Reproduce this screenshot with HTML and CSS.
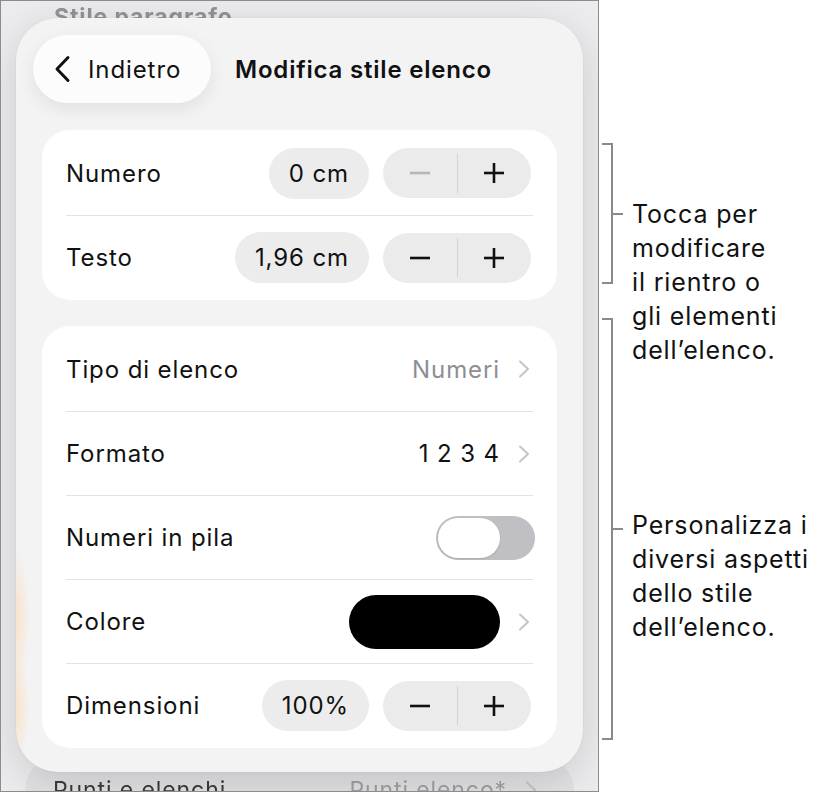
FILE: index.html
```html
<!DOCTYPE html>
<html lang="it">
<head>
  <meta charset="UTF-8">
  <meta name="viewport" content="width=device-width, initial-scale=1.0">
  <title>Modifica stile elenco</title>
  <link rel="stylesheet" href="styles.css">
</head>
<body>

  <div class="page">
    <div class="device">
      <!-- the sheet behind the popover -->
      <div class="backdrop">
        <div class="backdrop-title">Stile paragrafo</div>
        <div class="backdrop-card">
          <span>Punti e elenchi</span>
          <div class="detail">
            <span class="backdrop-value">Punti elenco*</span>
            <svg class="chevron" width="14" height="18" viewBox="0 0 14 18"><polyline points="3,1.5 11,9 3,16.5"/></svg>
          </div>
        </div>
      </div>

      <div class="popover">
        <div class="popover-header">
          <button class="back-btn">
            <svg width="17" height="28" viewBox="0 0 17 28"><polyline points="14,2.5 3,14 14,25.5" fill="none" stroke="#111" stroke-width="3" stroke-linecap="round" stroke-linejoin="round"/></svg>
            Indietro
          </button>
          <h1>Modifica stile elenco</h1>
        </div>

        <div class="group">
          <div class="row">
            <span>Numero</span>
            <div class="controls">
              <span class="value">0 cm</span>
              <div class="stepper">
                <span class="step disabled">
                  <svg width="22" height="22" viewBox="0 0 22 22"><line x1="1" y1="11" x2="21" y2="11"/></svg>
                </span>
                <span class="step-divider"></span>
                <span class="step">
                  <svg width="22" height="22" viewBox="0 0 22 22"><line x1="1" y1="11" x2="21" y2="11"/><line x1="11" y1="1" x2="11" y2="21"/></svg>
                </span>
              </div>
            </div>
          </div>
          <div class="row">
            <span>Testo</span>
            <div class="controls">
              <span class="value">1,96 cm</span>
              <div class="stepper">
                <span class="step">
                  <svg width="22" height="22" viewBox="0 0 22 22"><line x1="1" y1="11" x2="21" y2="11"/></svg>
                </span>
                <span class="step-divider"></span>
                <span class="step">
                  <svg width="22" height="22" viewBox="0 0 22 22"><line x1="1" y1="11" x2="21" y2="11"/><line x1="11" y1="1" x2="11" y2="21"/></svg>
                </span>
              </div>
            </div>
          </div>
        </div>

        <div class="group">
          <div class="row">
            <span>Tipo di elenco</span>
            <div class="detail">
              <span class="muted">Numeri</span>
              <svg class="chevron" width="14" height="18" viewBox="0 0 14 18"><polyline points="3,1.5 11,9 3,16.5"/></svg>
            </div>
          </div>
          <div class="row">
            <span>Formato</span>
            <div class="detail">
              <span class="digits">1 2 3 4</span>
              <svg class="chevron" width="14" height="18" viewBox="0 0 14 18"><polyline points="3,1.5 11,9 3,16.5"/></svg>
            </div>
          </div>
          <div class="row">
            <span>Numeri in pila</span>
            <span class="toggle"><span class="knob"></span></span>
          </div>
          <div class="row">
            <span>Colore</span>
            <div class="detail">
              <span class="swatch"></span>
              <svg class="chevron" width="14" height="18" viewBox="0 0 14 18"><polyline points="3,1.5 11,9 3,16.5"/></svg>
            </div>
          </div>
          <div class="row">
            <span>Dimensioni</span>
            <div class="controls">
              <span class="value">100%</span>
              <div class="stepper">
                <span class="step">
                  <svg width="22" height="22" viewBox="0 0 22 22"><line x1="1" y1="11" x2="21" y2="11"/></svg>
                </span>
                <span class="step-divider"></span>
                <span class="step">
                  <svg width="22" height="22" viewBox="0 0 22 22"><line x1="1" y1="11" x2="21" y2="11"/><line x1="11" y1="1" x2="11" y2="21"/></svg>
                </span>
              </div>
            </div>
          </div>
        </div>
      </div>
    </div>

    <div class="notes">
      <div class="brackets">
        <div class="bracket bracket-indent"></div>
        <div class="bracket bracket-style"></div>
      </div>
      <div class="note-text">
        <p class="note">Tocca per<br>modificare<br>il rientro o<br>gli elementi<br>dell’elenco.</p>
        <p class="note note-second">Personalizza i<br>diversi aspetti<br>dello stile<br>dell’elenco.</p>
      </div>
    </div>
  </div>

</body>
</html>
```

FILE: styles.css
```css
* {
  box-sizing: border-box;
}

body {
  margin: 0;
  font-family: Inter, "Noto Sans", sans-serif;
  background: #fff;
  color: #111;
}

.page {
  display: flex;
  align-items: flex-start;
}

/* device frame */
.device {
  position: relative;
  flex-shrink: 0;
  width: 599px;
  height: 792px;
  border: 1px solid #8c8c90;
  background: #ececee;
  overflow: hidden;
  letter-spacing: 0.9px;
}

.backdrop {
  height: 100%;
  display: flex;
  flex-direction: column;
  justify-content: space-between;
  filter: blur(0.6px);
}

.backdrop-title {
  margin: 2px 0 0 53px;
  font-size: 23px;
  font-weight: 700;
  color: #939397;
}

.backdrop-card {
  height: 64px;
  margin: 0 24px -32px;
  padding: 17px 34px 0 28px;
  display: flex;
  align-items: flex-start;
  justify-content: space-between;
  border-radius: 30px;
  background: #e2e2e5;
  font-size: 23px;
  color: #3a3a3c;
}

.backdrop-value {
  color: #a0a0a4;
}

/* popover */
.popover {
  position: absolute;
  left: 15px;
  top: 17px;
  width: 567px;
  height: 754px;
  padding: 17px 26px 0;
  border-radius: 42px;
  background:
    radial-gradient(ellipse 14px 70px at 0 600px, rgba(255, 214, 170, 0.6), transparent),
    radial-gradient(ellipse 14px 60px at 0 690px, rgba(255, 214, 170, 0.6), transparent),
    #f3f3f4;
  box-shadow: 0 10px 40px rgba(0, 0, 0, 0.14), 0 0 0 1px rgba(0, 0, 0, 0.02);
}

.popover-header {
  display: flex;
  align-items: center;
  gap: 24px;
  margin: 0 -9px 27px;
}

.back-btn {
  display: flex;
  align-items: center;
  gap: 17px;
  width: 178px;
  height: 68px;
  padding: 0 0 0 21px;
  border: none;
  border-radius: 34px;
  background: #fcfcfc;
  box-shadow: 0 6px 18px rgba(0, 0, 0, 0.08);
  font-family: inherit;
  font-size: 24px;
  letter-spacing: inherit;
  color: #111;
}

.popover-header h1 {
  margin: 0;
  font-size: 24px;
  font-weight: 600;
  letter-spacing: 0.8px;
}

/* grouped lists */
.group {
  padding: 1px 24px;
  border-radius: 28px;
  background: #fff;
}

.group + .group {
  margin-top: 26px;
}

.row {
  height: 84px;
  display: flex;
  align-items: center;
  justify-content: space-between;
  border-top: 1px solid #e3e3e5;
  font-size: 24px;
}

.row:first-child {
  border-top: none;
}

.controls {
  display: flex;
  align-items: center;
  gap: 14px;
  margin-right: 2px;
}

.value {
  height: 51px;
  padding: 0 20px;
  display: flex;
  align-items: center;
  border-radius: 26px;
  background: #ececed;
}

.stepper {
  width: 148px;
  height: 50px;
  display: flex;
  align-items: center;
  border-radius: 25px;
  background: #ebebec;
}

.step {
  flex: 1;
  display: flex;
  justify-content: center;
}

.step svg {
  stroke: #111;
  stroke-width: 2.6;
}

.step.disabled svg {
  stroke: #b6b6b8;
}

.step-divider {
  width: 1px;
  height: 39px;
  background: #d3d3d5;
}

.detail {
  display: flex;
  align-items: center;
  gap: 17px;
  margin-right: 2px;
}

.muted {
  color: #8e8e93;
}

.digits {
  word-spacing: 0;
}

.chevron polyline {
  fill: none;
  stroke: #c5c5c8;
  stroke-width: 2;
  stroke-linecap: round;
  stroke-linejoin: round;
}

.toggle {
  width: 99px;
  height: 44px;
  padding: 2px;
  margin-right: -2px;
  border-radius: 22px;
  background: #bfbfc4;
}

.knob {
  display: block;
  width: 62px;
  height: 40px;
  border-radius: 20px;
  background: #fff;
  box-shadow: 0 1px 2px rgba(0, 0, 0, 0.12);
}

.swatch {
  width: 151px;
  height: 54px;
  border-radius: 27px;
  background: #000;
}

/* callouts */
.notes {
  display: flex;
  margin-left: 3px;
}

.brackets {
  width: 30px;
  padding-top: 143px;
}

.bracket {
  position: relative;
  width: 11px;
  border: 2px solid #8a8a8a;
  border-left: none;
}

.bracket::after {
  content: "";
  position: absolute;
  left: 100%;
  top: calc(50% - 1px);
  width: 12px;
  height: 2px;
  background: #8a8a8a;
}

.bracket-indent {
  height: 141px;
}

.bracket-style {
  height: 422px;
  margin-top: 34px;
}

.note-text {
  padding-top: 197px;
}

.note {
  margin: 0;
  font-size: 25px;
  line-height: 34px;
  letter-spacing: 0.85px;
  white-space: nowrap;
}

.note-second {
  margin-top: 141px;
}
```
